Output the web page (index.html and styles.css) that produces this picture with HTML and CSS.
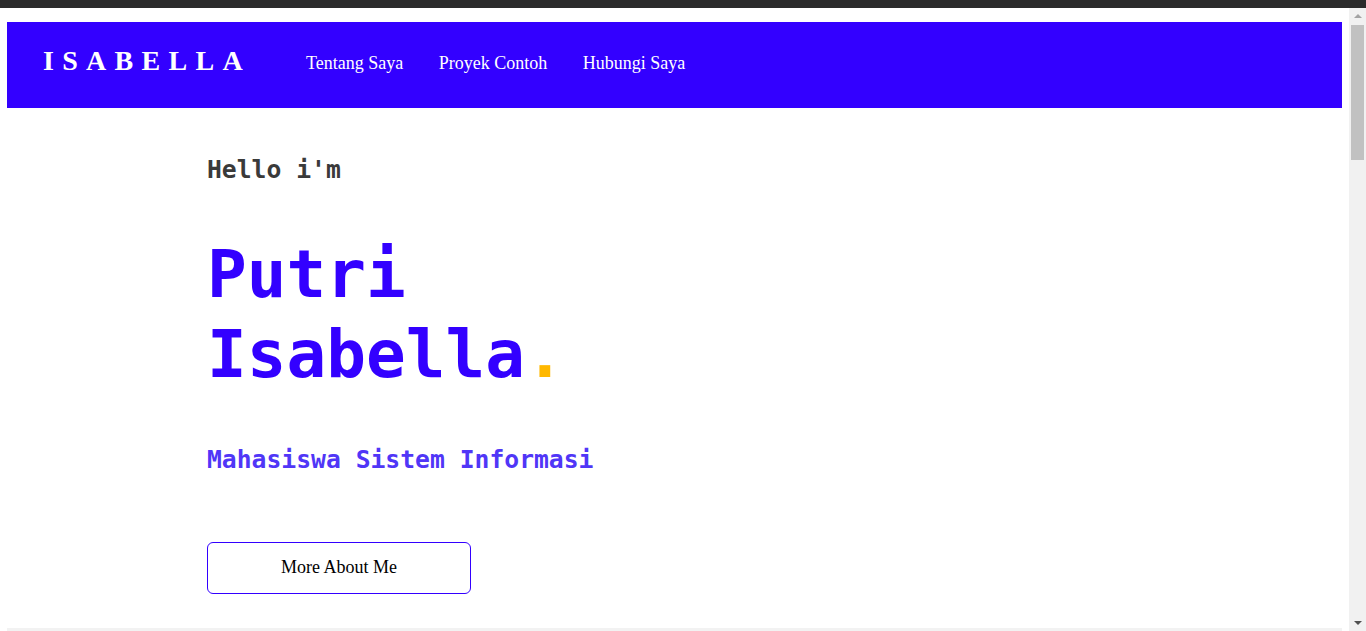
FILE: index.html
```html
<!DOCTYPE html>
<html lang="id">
<head>
<meta charset="utf-8">
<title>Isabella</title>
<link rel="stylesheet" href="styles.css">
</head>
<body>
<div class="topbar"></div>
<div class="page">
  <header class="navbar">
    <div class="logo">ISABELLA</div>
    <nav class="menu">
      <a href="#about">Tentang Saya</a>
      <a href="#project">Proyek Contoh</a>
      <a href="#contact">Hubungi Saya</a>
    </nav>
  </header>
  <main class="hero">
    <h3 class="hello">Hello i'm</h3>
    <h1 class="name">Putri<br>Isabella<span class="dot">.</span></h1>
    <h2 class="role">Mahasiswa Sistem Informasi</h2>
    <a class="btn" href="#about">More About Me</a>
  </main>
  <section class="about" id="about"></section>
</div>
<div class="scrollbar" aria-hidden="true">
  <span class="arrow up"></span>
  <span class="thumb"></span>
  <span class="arrow down"></span>
</div>
</body>
</html>
```

FILE: styles.css
```css
html, body {
  margin: 0;
  padding: 0;
  background: #ffffff;
}
.topbar {
  height: 8px;
  background: #2b2b2b;
}
.page {
  padding: 14px 24px 0 7px;
}
.navbar {
  height: 86px;
  background: #3300ff;
  display: flex;
  align-items: center;
  padding-left: 36px;
  font-family: "Liberation Serif", "Times New Roman", serif;
}
.logo {
  color: #ffffff;
  font-weight: bold;
  font-size: 28px;
  letter-spacing: 8.3px;
  margin-right: 55px;
  position: relative;
  top: -4px;
}
.menu {
  display: flex;
  gap: 35.5px;
  position: relative;
  top: -2px;
}
.menu a {
  color: #ffffff;
  text-decoration: none;
  font-size: 18px;
}
.hero {
  padding: 48px 0 34px 200px;
  font-family: "DejaVu Sans Mono", monospace;
}
.hello {
  margin: 0;
  font-size: 24.7px;
  line-height: 28px;
  font-weight: bold;
  color: #3a3a3a;
}
.name {
  margin: 51px 0 0 0;
  font-size: 66px;
  line-height: 80px;
  font-weight: bold;
  color: #3300ff;
}
.dot {
  color: #ffb800;
}
.role {
  margin: 51px 0 0 0;
  font-size: 24.7px;
  line-height: 28px;
  font-weight: bold;
  color: #5036f7;
}
.btn {
  display: flex;
  align-items: center;
  justify-content: center;
  box-sizing: border-box;
  width: 264px;
  height: 52px;
  margin-top: 68px;
  padding-bottom: 1px;
  border: 1px solid #3300ff;
  border-radius: 6px;
  color: #000000;
  text-decoration: none;
  font-family: "Liberation Serif", "Times New Roman", serif;
  font-size: 18px;
}
.about {
  background: #f2f2f2;
  min-height: 2200px;
}
.scrollbar {
  position: fixed;
  top: 8px;
  right: 0;
  bottom: 0;
  width: 17px;
  background: #f1f1f1;
  display: flex;
  flex-direction: column;
  align-items: center;
}
.arrow {
  width: 0;
  height: 0;
  border-left: 4px solid transparent;
  border-right: 4px solid transparent;
}
.arrow.up {
  margin-top: 6px;
  border-bottom: 4px solid #a3a3a3;
}
.arrow.down {
  margin-top: auto;
  margin-bottom: 6px;
  border-top: 4px solid #505050;
}
.thumb {
  width: 13px;
  height: 135px;
  margin-top: 7px;
  background: #c1c1c1;
}
```
